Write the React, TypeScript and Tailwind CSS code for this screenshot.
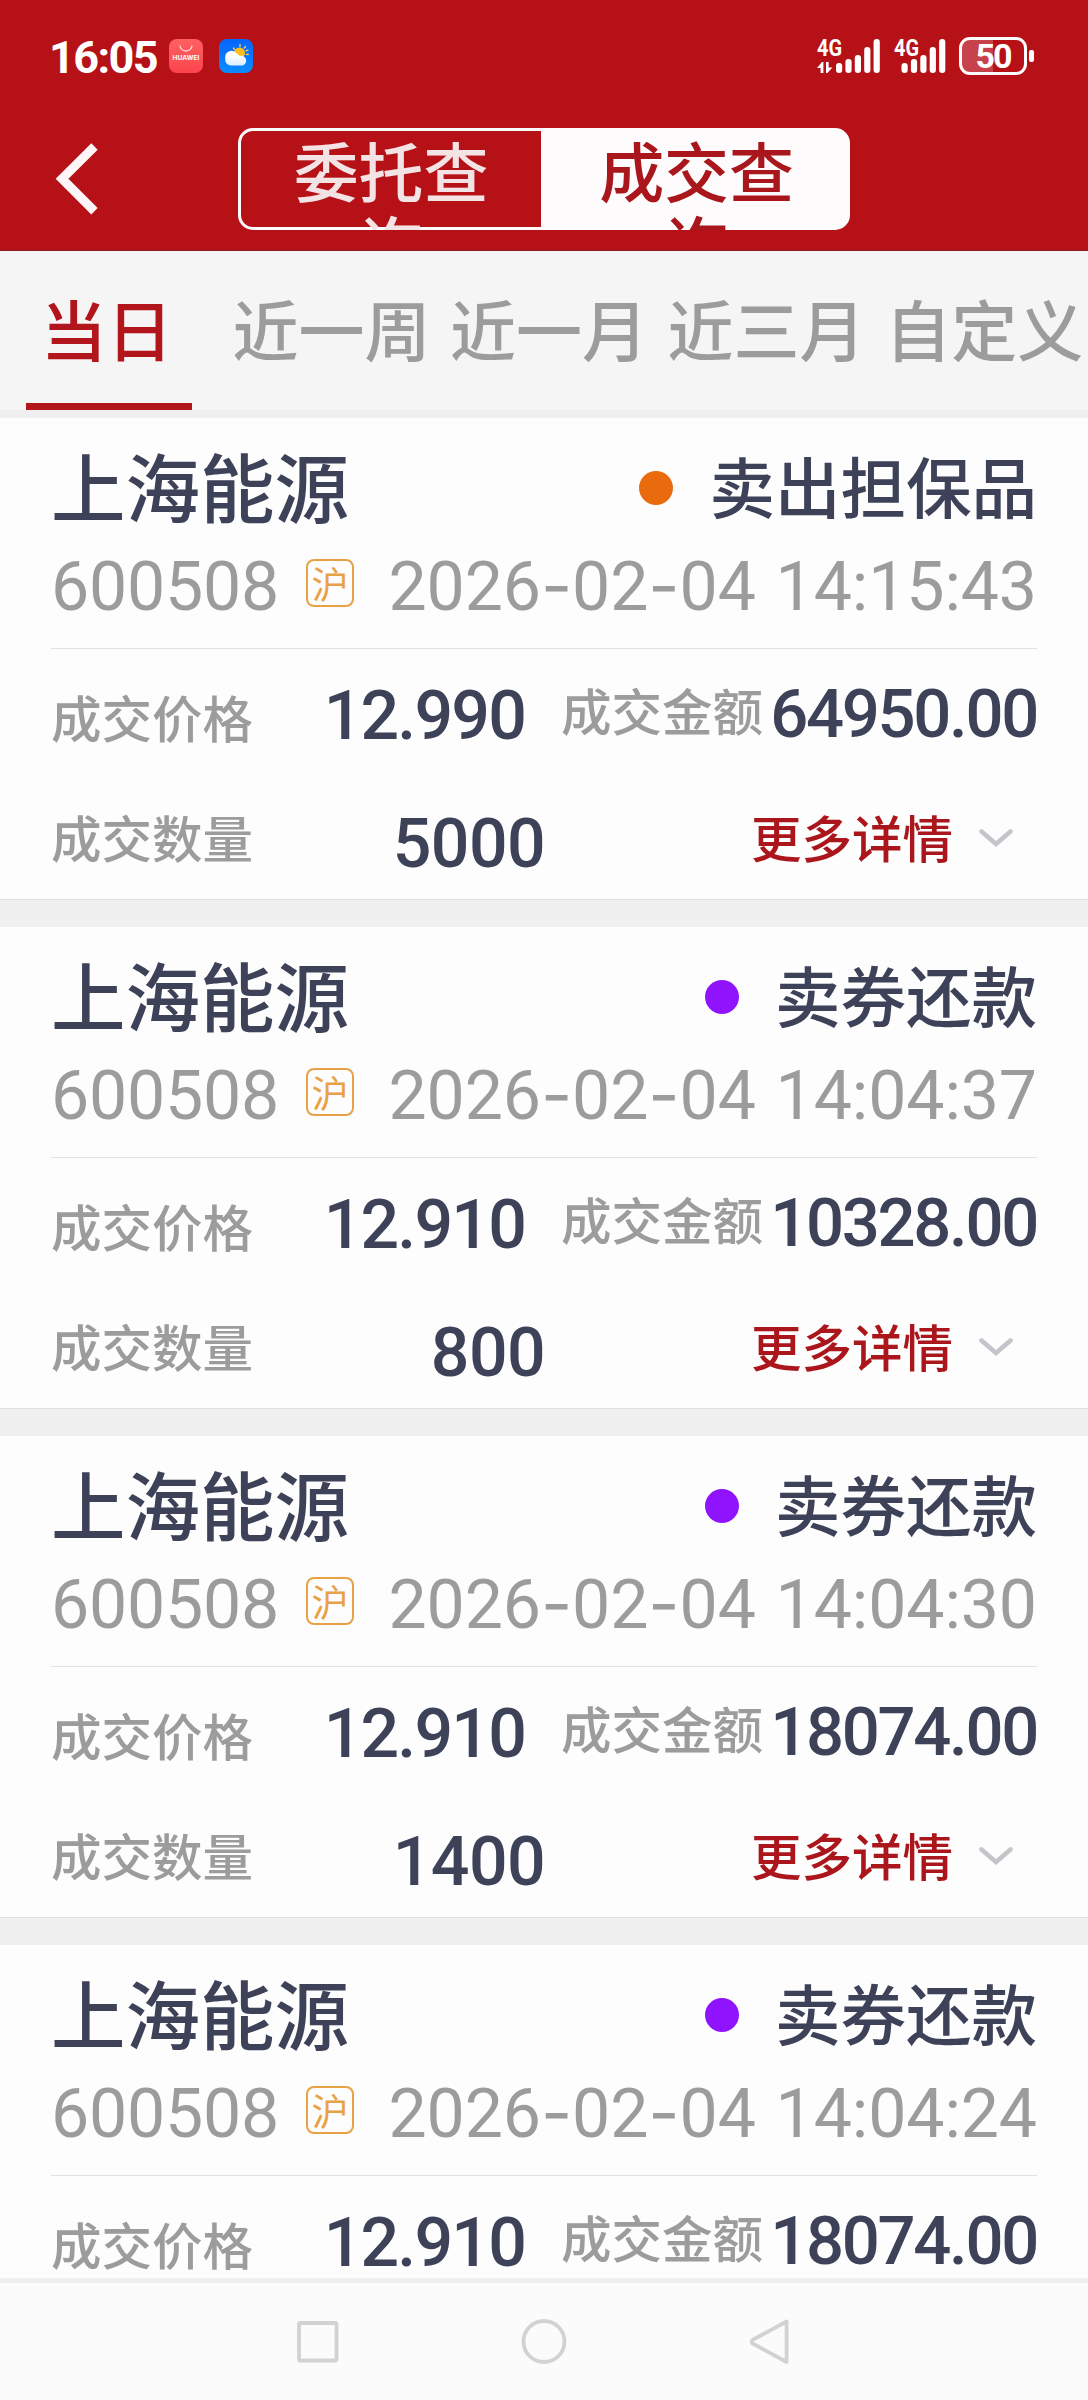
import React from "react";

type Trade = {
  side: string;
  dot: string;
  date: string[];
  time: string;
  price: string;
  amount: string;
  quantity: string;
};

const purple = "bg-[#9013fe]";
const date = ["2026", "02", "04"];

const trades: Trade[] = [
  { side: "卖出担保品", dot: "bg-[#ea6a0e]", date, time: "14:15:43", price: "12.990", amount: "64950.00", quantity: "5000" },
  { side: "卖券还款", dot: purple, date, time: "14:04:37", price: "12.910", amount: "10328.00", quantity: "800" },
  { side: "卖券还款", dot: purple, date, time: "14:04:30", price: "12.910", amount: "18074.00", quantity: "1400" },
  { side: "卖券还款", dot: purple, date, time: "14:04:24", price: "12.910", amount: "18074.00", quantity: "1400" },
];

const tabs = ["当日", "近一周", "近一月", "近三月", "自定义"];

const num = "font-['Roboto',sans-serif] whitespace-pre";

function Signal({ arrows }: { arrows?: boolean }) {
  const x0 = arrows ? 19 : 7.5;
  const tops = [24, 20, 16, 8, 0];
  return (
    <svg className="block h-[34px] w-[64px] overflow-visible" viewBox="0 0 64 34" fill="#fff">
      <text x="0" y="17" fontSize="23" fontWeight="700" fontFamily="Roboto, sans-serif" textLength="25" lengthAdjust="spacingAndGlyphs">
        4G
      </text>
      {tops.map((t, i) => (
        <rect key={i} x={x0 + i * 9.4} y={t} width="6.2" height={34 - t} rx="3" />
      ))}
      {arrows && <path d="M6.4 34H3.6V29H0l5-6h1.4zM9 23h2.6v5.500H15.400l-5 5.500H9z" />}
    </svg>
  );
}

function StatusBar() {
  return (
    <div className="flex h-[112px] items-start text-white">
      <div className={`${num} ml-[49px] mt-[36px] w-[120px] text-[45px] leading-[44px] font-bold tracking-[-1.6px]`}>16:05</div>
      <div className="mt-[39px] flex h-[34px] w-[34px] flex-col items-center rounded-[8px] bg-gradient-to-b from-[#ff6060] to-[#fc444e]">
        <svg className="mt-[6px] block h-[7px] w-[14px]" viewBox="0 0 14 7" fill="none" stroke="#ffd5d5" strokeWidth="1.300">
          <path d="M1 0.500a6 5.500 0 0 0 12 0" />
        </svg>
        <span className="font-['Inter',sans-serif] text-[6.500px] leading-[12px] font-bold tracking-[0.1px]">HUAWEI</span>
      </div>
      <svg className="mt-[39px] ml-[16px] block h-[34px] w-[34px]" viewBox="0 0 34 34">
        <defs>
          <linearGradient id="sky" x1="0" y1="0" x2="0" y2="1">
            <stop offset="0" stopColor="#0565fb" />
            <stop offset="1" stopColor="#0a8cff" />
          </linearGradient>
          <linearGradient id="cloud" x1="0" y1="0" x2="0" y2="1">
            <stop offset="0.300" stopColor="#fff" />
            <stop offset="1" stopColor="#dcebff" />
          </linearGradient>
        </defs>
        <rect width="34" height="34" rx="8" fill="url(#sky)" />
        <circle cx="20.500" cy="14" r="5.500" fill="#fcbf1e" />
        <path d="M14.500 9l1 1.300M21 5.500v2M26.500 7.500l-1.200 1.500M29 11.200l-2 .600M29.200 15.500l-2-.200" stroke="#fcd34d" strokeWidth="1.300" strokeLinecap="round" />
        <path d="M12 26.500a5.800 5.800 0 0 1-5.800-6v-2.500a6.300 6.300 0 0 1 11-4 7 7 0 0 1 3.200 2.800c3.500-.500 6.800 1.400 6.800 4.900 0 3-2.200 4.800-5 4.800z" fill="url(#cloud)" />
      </svg>
      <div className="mt-[39px] ml-[564px]">
        <Signal arrows />
      </div>
      <div className="mt-[39px] ml-[13px]">
        <Signal />
      </div>
      <div className="mt-[37px] ml-[1px] flex items-center">
        <div className="flex h-[38px] w-[68px] items-center justify-center overflow-hidden rounded-[11px] border-[3px] border-white bg-[linear-gradient(90deg,#c8424b_50%,transparent_50%)]">
          <span className={`${num} text-[34px] leading-[32px] font-bold tracking-[-2px]`}>50</span>
        </div>
        <div className="ml-[2px] h-[12px] w-[5px] rounded-[2px] bg-white" />
      </div>
    </div>
  );
}

function Header() {
  return (
    <header className="h-[251px] border-b border-[#8c2127] bg-[#b71118]">
      <StatusBar />
      <div className="flex">
        <svg className="mt-[27px] ml-[50px] block h-[80px] w-[54px]" viewBox="0 0 54 80" fill="none" stroke="#fdf5f6" strokeWidth="9">
          <path d="M44.500 7.500L12 39.700l32.500 32.500" />
        </svg>
        <div className="mt-[16px] ml-[134px] flex h-[102px] w-[612px] overflow-hidden rounded-[15px] bg-[#fdfbfb] text-center font-['Noto_Sans_CJK_SC',sans-serif] text-[65px] leading-[74px] font-medium">
          <div className="relative w-[303px]">
            <div className="absolute inset-y-[3px] right-0 left-[3px] rounded-l-[12px] bg-[#b71118]" />
            <div className="relative mx-auto w-[200px] pt-[4px] pl-[3px] tracking-[-0.2px] text-[#f3e3e4]">委托查询</div>
          </div>
          <div className="w-[309px]">
            <div className="mx-auto w-[200px] pt-[4px] pl-[2px] tracking-[-0.2px] text-[#a9171d]">成交查询</div>
          </div>
        </div>
      </div>
    </header>
  );
}

function Tabs() {
  return (
    <nav className="grid h-[167px] grid-cols-5 border-b-[8px] border-[#efefef] bg-[#f6f5f5] font-['Noto_Sans_CJK_SC',sans-serif] text-[66px] leading-[100px] font-medium text-[#9c9c9c]">
      {tabs.map((t, i) => (
        <div key={t} className="flex flex-col items-center justify-between whitespace-nowrap">
          <span className={i === 0 ? "mt-[26px] -ml-[4px] text-[#b2151c]" : "mt-[26px] ml-[10px]"}>{t}</span>
          {i === 0 && <span className="h-[7px] w-[166px] bg-[#b2151c]" />}
        </div>
      ))}
    </nav>
  );
}

function Timestamp({ date, time }: { date: string[]; time: string }) {
  return (
    <span className={`${num} ml-auto text-[68px] leading-[80px] tracking-[-0.1px] [word-spacing:3px]`}>
      {date.map((part, i) => (
        <React.Fragment key={i}>
          {i > 0 && <span className="font-['Inter',sans-serif]">-</span>}
          {part}
        </React.Fragment>
      ))}{" "}
      {time}
    </span>
  );
}

function TradeCard({ t }: { t: Trade }) {
  const label = "text-[50.500px] leading-[60px] whitespace-nowrap text-[#9c9c9c]";
  return (
    <section className="h-[509px] shrink-0 border-b-[27px] border-[#f0f0f0] bg-[#fdfdfd] font-['Noto_Sans_CJK_SC',sans-serif] font-medium text-[#3d4259]">
      <div className="h-[482px] border-b border-[#e0e0e0] px-[51px] pt-[18px]">
        <div className="flex h-[98px] items-center justify-between">
          <div className="text-[74.500px] leading-[98px]">上海能源</div>
          <div className="flex items-center text-[65.500px] leading-[98px]">
            <span className={`mt-[6px] mr-[36px] h-[34px] w-[34px] rounded-full ${t.dot}`} />
            {t.side}
          </div>
        </div>
        <div className="flex h-[115px] items-center border-b border-[#e2e2e2] pb-[10px] font-normal text-[#9c9c9c]">
          <span className={`${num} mt-[2px] w-[255px] text-[68px] leading-[80px] tracking-[-0.200px]`}>600508</span>
          <span className="mb-[6px] flex h-[48px] w-[48px] items-center justify-center rounded-[8px] border-[2px] border-[#e8a245] text-[37px] leading-[40px] text-[#e8a245]">
            沪
          </span>
          <Timestamp date={t.date} time={t.time} />
        </div>
        <div className="flex h-[130px] items-center">
          <span className={`${label} mt-[4px] w-[202px]`}>成交价格</span>
          <span className={`${num} mt-[4px] w-[272px] text-right text-[68px] leading-[80px] tracking-[-1.800px]`}>{t.price}</span>
          <span className={`${label} -mt-[10px] ml-[36px]`}>成交金额</span>
          <span className={`${num} ml-auto text-[67px] leading-[80px] tracking-[-2.300px]`}>{t.amount}</span>
        </div>
        <div className="flex h-[120px] items-center">
          <span className={`${label} -mt-[7px] w-[202px]`}>成交数量</span>
          <span className={`${num} mt-[10px] w-[292px] text-right text-[68px] leading-[80px] tracking-[-0.600px]`}>{t.quantity}</span>
          <span className="-mt-[7px] ml-[206px] text-[50.500px] leading-[60px] whitespace-nowrap text-[#ab161c]">更多详情</span>
          <svg className="-mt-[2px] ml-[25px] block h-[18px] w-[36px]" viewBox="0 0 36 18" fill="none" stroke="#c3c5cb" strokeWidth="4.500" strokeLinecap="round">
            <path d="M3.500 2.500L18 15l14.500-12.500" />
          </svg>
        </div>
      </div>
    </section>
  );
}

function NavBar() {
  return (
    <footer className="h-[122px] border-t-[5px] border-[#efefef] bg-[#fbfbfb]">
      <svg className="block h-[117px] w-[1088px]" viewBox="0 0 1088 117" fill="none" stroke="#d2d2d2" strokeWidth="3.800" strokeLinejoin="round">
        <rect x="299" y="40" width="37.500" height="37.500" rx="1.500" />
        <circle cx="544" cy="58.500" r="20.500" />
        <path d="M786.600 38.500v40.500l-34-18.500q-2-1.800 0-3.600z" />
      </svg>
    </footer>
  );
}

export default function App() {
  return (
    <div className="flex h-[2400px] w-[1088px] flex-col overflow-hidden bg-[#fdfdfd]">
      <Header />
      <Tabs />
      <main className="flex h-[1860px] flex-col overflow-hidden">
        {trades.map((t) => (
          <TradeCard key={t.time} t={t} />
        ))}
      </main>
      <NavBar />
    </div>
  );
}
